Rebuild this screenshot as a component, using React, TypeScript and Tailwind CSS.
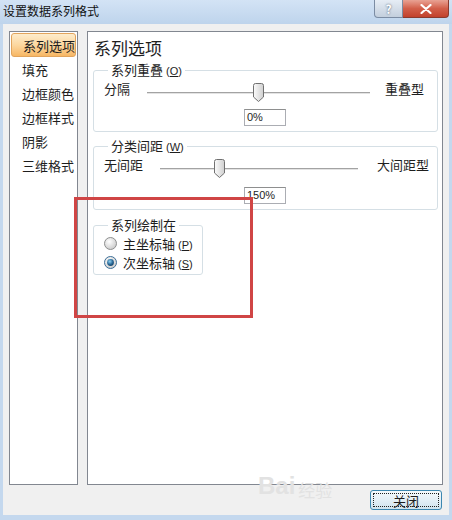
const cjk = "font-['Microsoft_YaHei','Noto_Sans_CJK_SC','Noto_Sans',sans-serif]";

const navItems = ["系列选项", "填充", "边框颜色", "边框样式", "阴影", "三维格式"];

function Thumb() {
  return (
    <svg width="11" height="19" viewBox="0 0 11 19">
      <defs>
        <linearGradient id="thumbFill" x1="0" x2="1" y1="0" y2="0">
          <stop offset="0" stopColor="#fbfbfb" />
          <stop offset="1" stopColor="#cfcfcf" />
        </linearGradient>
      </defs>
      <path
        d="M0.5 2.5 Q0.5 0.5 2.5 0.5 H8.5 Q10.5 0.5 10.5 2.5 V14 L5.5 18.5 L0.5 14 Z"
        fill="url(#thumbFill)"
        stroke="#707070"
      />
    </svg>
  );
}

function Radio({ checked }: { checked?: boolean }) {
  return (
    <svg width="13" height="13" viewBox="0 0 13 13">
      <defs>
        <radialGradient id="radioOff" cx="0.4" cy="0.35" r="0.7">
          <stop offset="0" stopColor="#ffffff" />
          <stop offset="1" stopColor="#c8c8c8" />
        </radialGradient>
        <radialGradient id="radioDot" cx="0.4" cy="0.35" r="0.7">
          <stop offset="0" stopColor="#8fd0f0" />
          <stop offset="0.6" stopColor="#2b6b99" />
          <stop offset="1" stopColor="#123f63" />
        </radialGradient>
      </defs>
      <circle cx="6.5" cy="6.5" r="6" fill="url(#radioOff)" stroke={checked ? "#3d6f98" : "#8e8f8f"} />
      {checked && <circle cx="6.5" cy="6.5" r="3.4" fill="url(#radioDot)" />}
    </svg>
  );
}

function Key({ k }: { k: string }) {
  return (
    <span className="ml-[3px] font-['Liberation_Sans',sans-serif] text-[11px]">
      (<span className="underline">{k}</span>)
    </span>
  );
}

function SliderRow({
  left,
  right,
  labelW,
  trackW,
  thumbX,
  gapR,
}: {
  left: string;
  right: string;
  labelW: number;
  trackW: number;
  thumbX: number;
  gapR: number;
}) {
  return (
    <div className="flex h-[24px] items-start">
      <span className="mt-[1px] shrink-0 text-[13px] leading-[16px]" style={{ width: labelW }}>
        {left}
      </span>
      <div className="relative h-[24px] shrink-0" style={{ width: trackW }}>
        <div className="absolute left-0 right-0 top-[12px] h-[2px] border-t border-[#a3a3a3] border-b-[#e3e3e3] border-b" />
        <div className="absolute top-[3px]" style={{ left: thumbX }}>
          <Thumb />
        </div>
      </div>
      <span className="mt-[1px] shrink-0 text-[13px] leading-[16px]" style={{ marginLeft: gapR }}>
        {right}
      </span>
    </div>
  );
}

function ValueBox({ value }: { value: string }) {
  return (
    <div className="ml-[140px] flex h-[17px] w-[42px] items-center border border-[#abadb3] border-t-[#8e8f8f] bg-white pl-[2px] font-['Liberation_Sans',sans-serif] text-[11px] leading-none">
      {value}
    </div>
  );
}

export default function App() {
  return (
    <div className={`relative flex h-[520px] w-[452px] flex-col overflow-hidden bg-[#c4d8ee] text-[#1e1e1e] ${cjk}`}>
      {/* title bar */}
      <div className="flex h-[24px] shrink-0 items-start bg-gradient-to-b from-[#d3e3f5] to-[#bed4ec]">
        <span className="ml-[3px] mt-[3px] text-[12px] leading-[16px] text-[#111]">设置数据系列格式</span>
        <div className="ml-auto mr-[3px] flex">
          <div className="flex h-[18px] w-[29px] items-center justify-center rounded-bl-[4px] border border-t-0 border-[#7b8ca3] bg-gradient-to-b from-[#e6edf5] to-[#c3cfdd] text-[12px] font-bold leading-none text-white [text-shadow:0_0_2px_#3b4b60]">
            ?
          </div>
          <div className="flex h-[18px] w-[46px] items-center justify-center rounded-br-[4px] border border-l-0 border-t-0 border-[#8a3a2e] bg-gradient-to-b from-[#e8a294] via-[#d25f4a] to-[#c2412c]">
            <svg width="12" height="10" viewBox="0 0 12 10">
              <path d="M1.5 1 L10.5 9 M10.5 1 L1.5 9" stroke="#fff" strokeWidth="2.2" strokeLinecap="round" />
            </svg>
          </div>
        </div>
      </div>

      {/* body */}
      <div className="mx-[3px] flex h-[491px] shrink-0 flex-col bg-[#f0f0f0] px-[6px] pt-[7px] pb-[5px]">
        <div className="flex flex-1 gap-[9px]">
          {/* nav */}
          <div className="w-[69px] shrink-0 border border-[#828790] bg-white px-[1px] pt-[1px]">
            {navItems.map((item, i) => (
              <div
                key={item}
                className={`flex h-[24px] items-center pl-[11px] text-[13px] leading-none ${
                  i === 0
                    ? "rounded-[3px] border border-[#e2a45c] bg-gradient-to-b from-[#fdeccc] via-[#fcd79f] to-[#f7b764] pl-[10px]"
                    : ""
                }`}
              >
                {item}
              </div>
            ))}
          </div>

          {/* content */}
          <div className="w-[356px] shrink-0 border border-[#828790] bg-white pl-[5px] pr-[4px] pt-[6px]">
            <div className="ml-[1px] h-[20px] text-[17px] leading-[20px]">系列选项</div>

            <fieldset className="mt-[5px] rounded-[3px] border border-[#d5dfe5] pb-[5px] pl-[10px]">
              <legend className="ml-[4px] px-[3px] text-[13px] leading-[14px]">
                系列重叠<Key k="O" />
              </legend>
              <div className="mt-[2px]">
                <SliderRow left="分隔" right="重叠型" labelW={43} trackW={223} thumbX={106} gapR={15} />
              </div>
              <div className="mt-[5px]">
                <ValueBox value="0%" />
              </div>
            </fieldset>

            <fieldset className="mt-[7px] rounded-[3px] border border-[#d5dfe5] pb-[5px] pl-[10px]">
              <legend className="ml-[4px] px-[3px] text-[13px] leading-[14px]">
                分类间距<Key k="W" />
              </legend>
              <div className="mt-[2px]">
                <SliderRow left="无间距" right="大间距型" labelW={56} trackW={198} thumbX={54} gapR={19} />
              </div>
              <div className="mt-[7px]">
                <ValueBox value="150%" />
              </div>
            </fieldset>

            <fieldset className="mt-[8px] w-[110px] rounded-[3px] border border-[#d5dfe5] pb-[2px] pl-[10px] pt-[2px]">
              <legend className="ml-[4px] px-[3px] text-[13px] leading-[14px]">系列绘制在</legend>
              <div className="flex h-[19px] items-center gap-[6px] text-[13px]">
                <Radio />
                <span>
                  主坐标轴<Key k="P" />
                </span>
              </div>
              <div className="flex h-[19px] items-center gap-[6px] text-[13px]">
                <Radio checked />
                <span>
                  次坐标轴<Key k="S" />
                </span>
              </div>
            </fieldset>
          </div>
        </div>

        <div className="mt-[5px] flex justify-end pr-[1px]">
          <div className="flex h-[20px] w-[72px] items-center justify-center rounded-[3px] border border-[#3c87b0] bg-gradient-to-b from-[#f4fafd] via-[#e4eff6] to-[#cfe3ee] p-[2px]">
            <div className="flex h-full w-full items-center justify-center border border-dotted border-[#222] text-[13px] leading-none">
              关闭
            </div>
          </div>
        </div>
      </div>

      {/* Baidu watermark */}
      <div className="pointer-events-none absolute left-[258px] top-[474px] flex items-end gap-[3px] text-[#e2e2e2]">
        <span className="font-['Liberation_Sans',sans-serif] text-[24px] font-bold leading-none">Bai</span>
        <span className="text-[17px] leading-none">经验</span>
      </div>

      {/* red annotation */}
      <div className="pointer-events-none absolute left-[74px] top-[197px] h-[121px] w-[179px] border-[3px] border-[#d04545]" />
    </div>
  );
}
